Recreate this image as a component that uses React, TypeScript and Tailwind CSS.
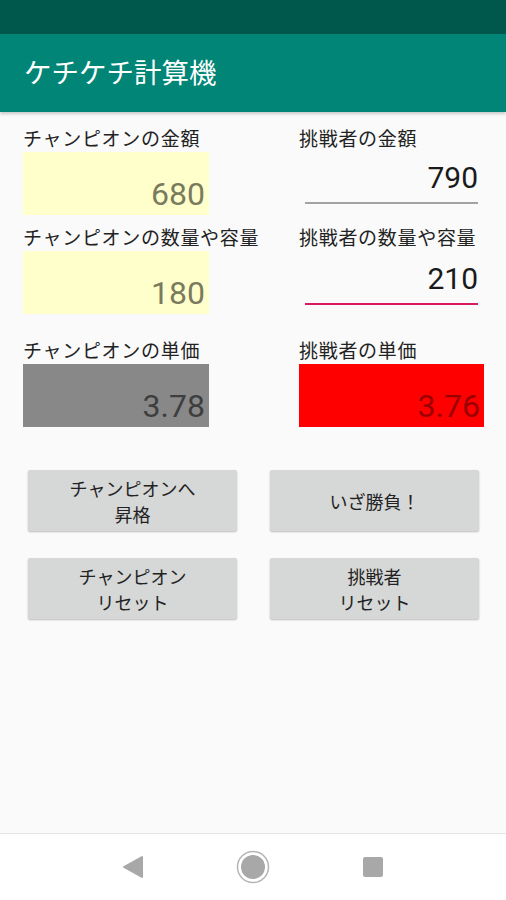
const jp = { fontFamily: '"Noto Sans CJK JP", "Noto Sans", sans-serif' };
const num = { fontFamily: 'Roboto, "Liberation Sans", sans-serif' };

function Label({ children }: { children: React.ReactNode }) {
  return (
    <p style={jp} className="text-[19px] leading-[24px] tracking-[0.7px] text-[#222] whitespace-nowrap">
      {children}
    </p>
  );
}

function Box({ value, bg, color }: { value: string; bg: string; color: string }) {
  return (
    <div
      className={`mt-[2px] h-[63px] flex items-end justify-end pr-[4px] pb-[5px] ${bg}`}
    >
      <span style={num} className={`text-[32px] leading-none ${color}`}>
        {value}
      </span>
    </div>
  );
}

function Field({ value, line, pt }: { value: string; line: string; pt: string }) {
  return (
    <div className={`mt-[2px] h-[63px] px-[6px] ${pt}`}>
      <p style={num} className="text-[30px] leading-[36px] text-right text-[#1a1a1a]">
        {value}
      </p>
      <div className={`mt-[6px] h-[2px] ${line}`} />
    </div>
  );
}

function Btn({ lines }: { lines: string[] }) {
  return (
    <button
      style={jp}
      className="h-[61px] rounded-[2px] bg-[#d6d7d7] shadow-[0_1px_2px_rgba(0,0,0,0.25)] text-[18px] leading-[26px] text-[#222] flex flex-col items-center justify-center"
    >
      {lines.map((l) => (
        <span key={l}>{l}</span>
      ))}
    </button>
  );
}

export default function App() {
  return (
    <div className="w-[506px] h-[900px] flex flex-col bg-[#fafafa] overflow-hidden">
      <div className="h-[34px] bg-[#00574b]" />
      <div className="h-[78px] bg-[#008577] flex items-center px-[24px] shadow-[0_2px_3px_rgba(0,0,0,0.2)]">
        <h1 style={jp} className="text-[27.5px] text-white leading-none -mt-[2px]">
          ケチケチ計算機
        </h1>
      </div>

      <main className="flex-1 pt-[14px]">
        <div className="grid grid-cols-[186px_185px] gap-x-[90px] pl-[23px]">
          <div>
            <Label>チャンピオンの金額</Label>
            <Box value="680" bg="bg-[#ffffcc]" color="text-[#7a7a5c]" />
          </div>
          <div>
            <Label>挑戦者の金額</Label>
            <Field value="790" line="bg-[#a3a3a3]" pt="pt-[8px]" />
          </div>

          <div className="mt-[10px]">
            <Label>チャンピオンの数量や容量</Label>
            <Box value="180" bg="bg-[#ffffcc]" color="text-[#7a7a5c]" />
          </div>
          <div className="mt-[10px]">
            <Label>挑戦者の数量や容量</Label>
            <Field value="210" line="bg-[#d81b60]" pt="pt-[10px]" />
          </div>

          <div className="mt-[24px]">
            <Label>チャンピオンの単価</Label>
            <Box value="3.78" bg="bg-[#888888]" color="text-[#3e3e3e]" />
          </div>
          <div className="mt-[24px]">
            <Label>挑戦者の単価</Label>
            <Box value="3.76" bg="bg-[#ff0000]" color="text-[#9a0000]" />
          </div>
        </div>

        <div className="mt-[43px] pl-[28px] grid grid-cols-[209px_209px] gap-x-[33px] gap-y-[27px]">
          <Btn lines={["チャンピオンへ", "昇格"]} />
          <Btn lines={["いざ勝負！"]} />
          <Btn lines={["チャンピオン", "リセット"]} />
          <Btn lines={["挑戦者", "リセット"]} />
        </div>
      </main>

      <nav className="h-[67px] bg-white border-t border-[#e6e6e6] flex items-center justify-center gap-[92px]">
        <svg width="22" height="24" viewBox="0 0 22 24">
          <path d="M20 2 L20 22 L2 12 Z" fill="#a8a8a8" stroke="#a8a8a8" strokeWidth="2" strokeLinejoin="round" />
        </svg>
        <svg width="34" height="34" viewBox="0 0 34 34">
          <circle cx="17" cy="17" r="15.5" fill="none" stroke="#b5b5b5" strokeWidth="1.5" />
          <circle cx="17" cy="17" r="12" fill="#a8a8a8" />
        </svg>
        <svg width="22" height="22" viewBox="0 0 22 22">
          <rect x="1" y="1" width="20" height="20" rx="2" fill="#a8a8a8" />
        </svg>
      </nav>
    </div>
  );
}
